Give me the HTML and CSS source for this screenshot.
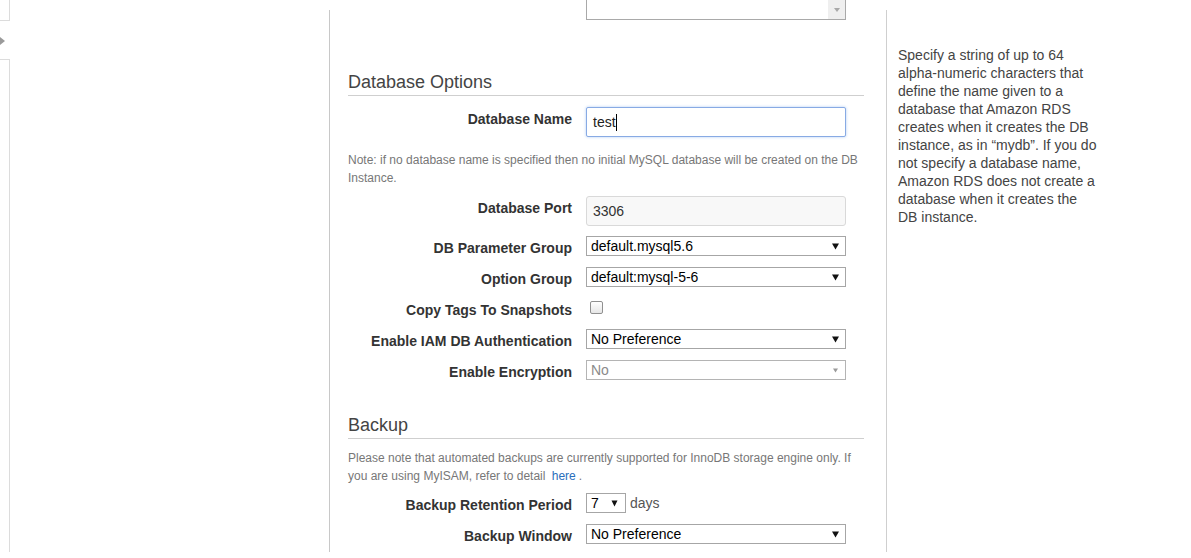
FILE: index.html
```html
<!DOCTYPE html>
<html lang="en">
<head>
<meta charset="utf-8">
<title>Database Options</title>
<link rel="stylesheet" href="styles.css">
</head>
<body>
<div class="page">
  <aside class="nav">
    <div class="nav-tab"></div>
    <div class="nav-toggle"></div>
    <div class="nav-panel"></div>
  </aside>

  <main class="form-col">
    <div class="row row-top">
      <div class="label"></div>
      <div class="listbox"><span class="scroll-btn"><svg width="6" height="4" viewBox="0 0 6 4"><path d="M0 0H6L3 4Z" fill="#a8a8a8"/></svg></span></div>
    </div>

    <h2 class="section-title">Database Options</h2>

    <div class="row row-name">
      <div class="label">Database Name</div>
      <div class="text-input focused"><span>test</span><span class="caret-line"></span></div>
    </div>

    <p class="note note-db">Note: if no database name is specified then no initial MySQL database will be created on the DB Instance.</p>

    <div class="row row-port">
      <div class="label">Database Port</div>
      <div class="text-input readonly"><span>3306</span></div>
    </div>

    <div class="row row-param">
      <div class="label">DB Parameter Group</div>
      <div class="select"><span>default.mysql5.6</span><svg class="arrow" width="7" height="7" viewBox="0 0 7 7"><path d="M0 0.5H7L3.5 6.5Z"/></svg></div>
    </div>

    <div class="row row-gap">
      <div class="label">Option Group</div>
      <div class="select"><span>default:mysql-5-6</span><svg class="arrow" width="7" height="7" viewBox="0 0 7 7"><path d="M0 0.5H7L3.5 6.5Z"/></svg></div>
    </div>

    <div class="row row-gap">
      <div class="label">Copy Tags To Snapshots</div>
      <div class="check-wrap"><span class="checkbox"></span></div>
    </div>

    <div class="row row-gap">
      <div class="label">Enable IAM DB Authentication</div>
      <div class="select"><span>No Preference</span><svg class="arrow" width="7" height="7" viewBox="0 0 7 7"><path d="M0 0.5H7L3.5 6.5Z"/></svg></div>
    </div>

    <div class="row row-gap">
      <div class="label">Enable Encryption</div>
      <div class="select disabled"><span>No</span><svg class="arrow" width="7" height="7" viewBox="0 0 7 7"><path d="M1 1.5H6L3.5 5.5Z"/></svg></div>
    </div>

    <h2 class="section-title backup-title">Backup</h2>

    <p class="note note-backup">Please note that automated backups are currently supported for InnoDB storage engine only. If you are using MyISAM, refer to detail <a href="#" class="link">here</a><span class="dot">.</span></p>

    <div class="row row-retention">
      <div class="label">Backup Retention Period</div>
      <div class="select select-small"><span>7</span><svg class="arrow" width="7" height="7" viewBox="0 0 7 7"><path d="M0.5 0.5H6.5L3.5 6.5Z"/></svg></div>
      <span class="days">days</span>
    </div>

    <div class="row row-gap">
      <div class="label">Backup Window</div>
      <div class="select"><span>No Preference</span><svg class="arrow" width="7" height="7" viewBox="0 0 7 7"><path d="M0 0.5H7L3.5 6.5Z"/></svg></div>
    </div>
  </main>

  <aside class="help">
    <p class="help-text">Specify a string of up to 64 alpha-numeric characters that define the name given to a database that Amazon RDS creates when it creates the DB instance, as in “mydb”. If you do not specify a database name, Amazon RDS does not create a database when it creates the DB instance.</p>
  </aside>
</div>
</body>
</html>
```

FILE: styles.css
```css
html, body {
  margin: 0;
  padding: 0;
  background: #fff;
}

body {
  font-family: "Liberation Sans", Arial, sans-serif;
  font-size: 14px;
  color: #333;
}

.page {
  display: flex;
  height: 552px;
  overflow: hidden;
}

/* left navigation strip */
.nav {
  width: 329px;
  flex: none;
  display: flex;
  flex-direction: column;
}

.nav-tab {
  width: 9px;
  height: 20px;
  border-right: 1px solid #dcdcdc;
  border-bottom: 1px solid #dcdcdc;
}

.nav-toggle {
  width: 0;
  height: 0;
  margin-top: 16px;
  border-left: 5px solid #9a9a9a;
  border-top: 4px solid transparent;
  border-bottom: 4px solid transparent;
}

.nav-panel {
  flex: 1;
  width: 9px;
  margin-top: 14px;
  border-top: 1px solid #dcdcdc;
  border-right: 1px solid #dcdcdc;
}

/* main form column */
.form-col {
  width: 516px;
  flex: none;
  margin-top: 10px;
  padding: 0 22px 0 18px;
  border-left: 1px solid #c8c8c8;
  border-right: 1px solid #cfcfcf;
}

.row {
  display: flex;
  align-items: flex-start;
  gap: 14px;
}

.label {
  width: 224px;
  flex: none;
  text-align: right;
  padding-top: 4px;
  font-weight: bold;
  font-size: 14px;
  line-height: 16px;
  color: #333;
}

.row-top {
  margin-top: -14px;
}

.listbox {
  width: 260px;
  height: 24px;
  box-sizing: border-box;
  border: 1px solid #a9a9a9;
  display: flex;
  justify-content: flex-end;
}

.scroll-btn {
  width: 17px;
  height: 22px;
  background: #efefef;
  display: flex;
  justify-content: center;
  align-items: flex-end;
  padding-bottom: 7px;
  box-sizing: border-box;
}

.section-title {
  margin: 52px 0 0;
  padding-bottom: 3px;
  font-size: 18px;
  line-height: 20px;
  font-weight: normal;
  color: #444;
  border-bottom: 1px solid #cfcfcf;
}

.backup-title {
  margin-top: 35px;
}

.row-name {
  margin-top: 11px;
}

.text-input {
  width: 260px;
  height: 30px;
  box-sizing: border-box;
  border: 1px solid #cccccc;
  border-radius: 2px;
  padding: 0 6px;
  display: flex;
  align-items: center;
  font-size: 14px;
  color: #222;
  background: #fff;
}

.text-input.focused {
  border-color: #88aae4;
  box-shadow: 0 0 3px rgba(110, 160, 235, 0.55);
}

.text-input.readonly {
  background: #f8f8f8;
  border-color: #d9d9d9;
  border-radius: 3px;
  color: #333;
}

.caret-line {
  width: 1px;
  height: 17px;
  background: #000;
}

.note {
  margin: 14px 0 0;
  font-size: 12px;
  line-height: 18px;
  color: #777;
}

.note-backup {
  margin-top: 10px;
}

.link {
  margin-left: 3px;
  color: #2a6ebb;
  text-decoration: none;
}

.dot {
  margin-left: 3px;
}

.row-port {
  margin-top: 9px;
}

.row-param {
  margin-top: 10px;
}

.row-gap {
  margin-top: 11px;
}

.row-retention {
  margin-top: 8px;
  gap: 0;
}

.row-retention .label {
  margin-right: 14px;
}

.select {
  width: 260px;
  height: 20px;
  box-sizing: border-box;
  border: 1px solid #a6a6a6;
  background: #fff;
  padding: 0 6px 0 4px;
  display: flex;
  align-items: center;
  justify-content: space-between;
  font-size: 14px;
  line-height: 16px;
  color: #000;
}

.select .arrow {
  fill: #111;
  flex: none;
}

.select.disabled {
  color: #8a8a8a;
  border-color: #b4b4b4;
}

.select.disabled .arrow {
  fill: #9a9a9a;
}

.select-small {
  width: 40px;
  padding-right: 7px;
}

.days {
  margin-left: 4px;
  font-size: 14px;
  line-height: 20px;
  color: #555;
}

.check-wrap {
  height: 20px;
}

.checkbox {
  display: block;
  width: 13px;
  height: 13px;
  box-sizing: border-box;
  margin: 3px 0 0 4px;
  border: 1px solid #909090;
  border-radius: 2px;
  background: linear-gradient(#ffffff, #e6e6e6);
}

/* help column */
.help {
  flex: none;
  margin-top: 10px;
  padding: 36px 0 0 11px;
}

.help-text {
  margin: 0;
  width: 201px;
  font-size: 14px;
  line-height: 18px;
  color: #444;
}
```
